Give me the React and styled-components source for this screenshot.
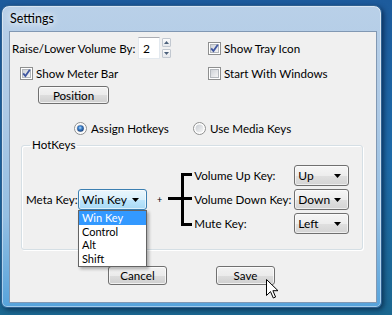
import React from 'react';
import styled, { createGlobalStyle } from 'styled-components';

const FONT = `"Lato", "Liberation Sans", Arial, sans-serif`;

const Global = createGlobalStyle`
  html, body { margin: 0; padding: 0; }
  body {
    width: 392px; height: 315px; overflow: hidden;
    font-family: ${FONT};
    font-size: 11.6px;
    color: #000;
  }
`;

const Desktop = styled.div`
  width: 392px; height: 315px; box-sizing: border-box;
  padding: 5px 0 0 1px;
  background: linear-gradient(180deg, #1d5b9c 0%, #1e6aa8 50%, #1b6790 100%);
`;

const Window = styled.div`
  width: 381px; height: 303px; box-sizing: border-box;
  border: 1px solid #2d5f8f;
  border-radius: 8px 8px 6px 6px;
  background: linear-gradient(180deg, #b9d0e8 0%, #adc9e5 35%, #94bfe3 70%, #56a3db 100%);
  padding: 0 4px 4px 7px;
  display: flex; flex-direction: column;
  box-shadow: 2px 2px 5px rgba(0, 20, 50, 0.6), inset 0 0 0 1px rgba(255,255,255,0.45);
`;

const TitleBar = styled.div`
  height: 25px; display: flex; align-items: center;
  padding-left: 1px;
  font-size: 12.5px;
  text-shadow: 0 0 6px #fff, 0 0 10px rgba(255,255,255,0.9);
`;

const Client = styled.div`
  position: relative;
  flex: 1;
  border: 1px solid #8198b3;
  background: #f0f0f0;
  display: flex; flex-direction: column;
`;

const TopGrid = styled.div`
  display: grid;
  grid-template-columns: 196px 1fr;
  row-gap: 7px;
  align-items: center;
  margin: 5px 0 0 2px;
`;

const Row = styled.div`
  display: flex; align-items: center;
  padding-left: ${p => p.$indent || 0}px;
`;

const Label = styled.span`
  display: inline-block;
  width: ${p => (p.$w ? `${p.$w}px` : 'auto')};
  white-space: nowrap;
  line-height: 15px;
`;

const TextBox = styled.div`
  width: 22px; height: 22px; box-sizing: border-box;
  border: 1px solid #e3e9ef; border-top-color: #abadb3;
  background: #fff;
  padding-left: 4px;
  font-size: 12px;
  display: flex; align-items: center;
`;

const SpinCol = styled.div`
  display: flex; flex-direction: column; gap: 2px;
  margin-left: 2px;
`;

const SpinBtn = styled.div`
  width: 9px; height: 9px; box-sizing: border-box;
  border: 1px solid #c2c8d0; border-radius: 1px;
  background: linear-gradient(#fbfbfb, #e6e8ec);
  display: flex; align-items: center; justify-content: center;
`;

const CheckWrap = styled.label`
  display: inline-flex; align-items: center; gap: 3px;
  line-height: 15px;
  white-space: nowrap;
`;

const Button = styled.div`
  width: ${p => p.$w}px; height: ${p => p.$h}px; box-sizing: border-box;
  border: 1px solid #707070; border-radius: 3px;
  background: linear-gradient(180deg, #f2f2f2 0%, #ebebeb 50%, #dddddd 51%, #cfcfcf 100%);
  box-shadow: inset 0 0 0 1px rgba(255,255,255,0.7);
  display: flex; align-items: center; justify-content: center;
  margin: ${p => p.$m || '0'};
`;

const RadioRow = styled.div`
  display: flex; align-items: center;
  margin: 18px 0 0 64px;
  height: 13px;
`;

const RadioItem = styled.label`
  display: inline-flex; align-items: center; gap: 4px;
  width: ${p => (p.$w ? `${p.$w}px` : 'auto')};
  white-space: nowrap;
`;

const Group = styled.fieldset`
  width: 342px; box-sizing: border-box;
  margin: 2px 0 0 11px;
  border: 1px solid #d5dfe5;
  border-radius: 3px;
  box-shadow: inset 1px 1px 0 #fff, 1px 1px 0 #fff;
  padding: 12px 14px 15px 4px;
  display: flex; align-items: center;
`;

const Legend = styled.legend`
  padding: 0 2px;
  margin-left: 4px;
  line-height: 16px;
`;

const ComboWrap = styled.div`
  position: relative;
`;

const Combo = styled.div`
  width: ${p => p.$w}px; height: ${p => p.$h || 21}px; box-sizing: border-box;
  border: 1px solid ${p => (p.$hot ? '#3c7fb1' : '#707070')};
  border-radius: 3px;
  background: ${p => (p.$hot
    ? 'linear-gradient(180deg, #eaf6fd 0%, #d9f0fc 50%, #bee6fd 51%, #a7d9f5 100%)'
    : 'linear-gradient(180deg, #f6f6f6 0%, #ededed 50%, #e0e0e0 51%, #d4d4d4 100%)')};
  box-shadow: inset 0 0 0 1px rgba(255,255,255,0.6);
  display: flex; align-items: center; justify-content: space-between;
  padding: 0 7px 0 3px;
  font-size: 12px;
`;

const DropList = styled.ul`
  position: absolute; top: 100%; left: 0;
  width: 69px; box-sizing: border-box;
  margin: 0; padding: 0 0 1px 0; list-style: none;
  background: #fff;
  border: 1px solid #646464;
  box-shadow: 2px 2px 3px rgba(0,0,0,0.3);
  z-index: 2;
`;

const DropItem = styled.li`
  height: 13.5px; line-height: 13.5px;
  padding-left: 3px;
  font-size: 11px;
  background: ${p => (p.$sel ? '#3399ff' : 'transparent')};
  color: ${p => (p.$sel ? '#fff' : '#000')};
`;

const Plus = styled.span`
  margin: 0 6px 0 10px;
  font-size: 9px;
  line-height: 9px;
`;

const KeyGrid = styled.div`
  display: grid;
  grid-template-columns: 100px 54px;
  grid-auto-rows: 21px;
  row-gap: 3px;
  align-items: center;
  margin-left: 2px;
`;

const ButtonRow = styled.div`
  display: flex; gap: 49px;
  margin: 16px 0 0 98px;
`;

const Cursor = styled.svg`
  position: absolute; left: 256px; top: 247px;
  z-index: 3;
`;

const Arrow = () => (
  <svg width="7" height="4" viewBox="0 0 7 4"><path d="M0 0h7L3.5 4z" fill="#000" /></svg>
);

const TinyTri = ({ up }) => (
  <svg width="5" height="3" viewBox="0 0 5 3">
    <path d={up ? 'M0 3h5L2.5 0z' : 'M0 0h5L2.5 3z'} fill="#4c607a" />
  </svg>
);

const CheckBox = ({ checked }) => (
  <svg width="13" height="13" viewBox="0 0 13 13">
    <defs>
      <linearGradient id="cbg" x1="0" y1="0" x2="1" y2="1">
        <stop offset="0" stopColor="#cdd1d6" />
        <stop offset="1" stopColor="#f7f7f7" />
      </linearGradient>
    </defs>
    <rect x="0.5" y="0.5" width="12" height="12" fill="#fff" stroke="#8e8f8f" />
    <rect x="2.5" y="2.5" width="8" height="8" fill="url(#cbg)" stroke="#b4b8bd" />
    {checked && (
      <path d="M3.2 6.4 L5.4 9 L9.8 2.8" fill="none" stroke="#3f56a0" strokeWidth="1.8" />
    )}
  </svg>
);

const Radio = ({ checked }) => (
  <svg width="13" height="13" viewBox="0 0 13 13">
    <defs>
      <radialGradient id="rdot" cx="0.45" cy="0.4" r="0.6">
        <stop offset="0" stopColor="#b8e0ff" />
        <stop offset="0.45" stopColor="#3b7fc9" />
        <stop offset="1" stopColor="#1a3f78" />
      </radialGradient>
      <linearGradient id="rbg" x1="0" y1="0" x2="1" y2="1">
        <stop offset="0" stopColor="#c9cdd3" />
        <stop offset="1" stopColor="#f6f6f6" />
      </linearGradient>
    </defs>
    <circle cx="6.5" cy="6.5" r="6" fill="#fff" stroke="#8e8f8f" />
    <circle cx="6.5" cy="6.5" r="4" fill="url(#rbg)" />
    {checked && <circle cx="6.5" cy="6.5" r="3.3" fill="url(#rdot)" />}
  </svg>
);

const Brace = () => (
  <svg width="24" height="53" viewBox="0 0 24 53">
    <path d="M0 25.5H24 M14.5 0V53 M13 1.5H24 M13 51.5H24" stroke="#000" strokeWidth="3" fill="none" />
  </svg>
);

export default function App() {
  return (
    <>
      <Global />
      <Desktop>
        <Window>
          <TitleBar>Settings</TitleBar>
          <Client>
            <TopGrid>
              <Row>
                <Label $w={126}>Raise/Lower Volume By:</Label>
                <TextBox>2</TextBox>
                <SpinCol>
                  <SpinBtn><TinyTri up /></SpinBtn>
                  <SpinBtn><TinyTri /></SpinBtn>
                </SpinCol>
              </Row>
              <Row>
                <CheckWrap><CheckBox checked />Show Tray Icon</CheckWrap>
              </Row>
              <Row $indent={8}>
                <CheckWrap><CheckBox checked />Show Meter Bar</CheckWrap>
              </Row>
              <Row>
                <CheckWrap><CheckBox />Start With Windows</CheckWrap>
              </Row>
            </TopGrid>
            <Button $w={71} $h={18} $m="5px 0 0 28px">Position</Button>
            <RadioRow>
              <RadioItem $w={119}><Radio checked />Assign Hotkeys</RadioItem>
              <RadioItem><Radio />Use Media Keys</RadioItem>
            </RadioRow>
            <Group>
              <Legend>HotKeys</Legend>
              <Label $w={52}>Meta Key:</Label>
              <ComboWrap>
                <Combo $w={69} $h={21} $hot>Win Key<Arrow /></Combo>
                <DropList>
                  <DropItem $sel>Win Key</DropItem>
                  <DropItem>Control</DropItem>
                  <DropItem>Alt</DropItem>
                  <DropItem>Shift</DropItem>
                </DropList>
              </ComboWrap>
              <Plus>+</Plus>
              <Brace />
              <KeyGrid>
                <Label>Volume Up Key:</Label>
                <Combo $w={55}>Up<Arrow /></Combo>
                <Label>Volume Down Key:</Label>
                <Combo $w={55}>Down<Arrow /></Combo>
                <Label>Mute Key:</Label>
                <Combo $w={55}>Left<Arrow /></Combo>
              </KeyGrid>
            </Group>
            <ButtonRow>
              <Button $w={59} $h={19}>Cancel</Button>
              <Button $w={59} $h={19}>Save</Button>
            </ButtonRow>
            <Cursor width="13" height="20" viewBox="0 0 13 20">
              <path d="M0.5 0.5 V16.5 L4.5 12.6 L7.3 19 L9.6 18 L6.9 11.7 H12 Z" fill="#fff" stroke="#000" strokeWidth="1" strokeLinejoin="miter" />
            </Cursor>
          </Client>
        </Window>
      </Desktop>
    </>
  );
}
